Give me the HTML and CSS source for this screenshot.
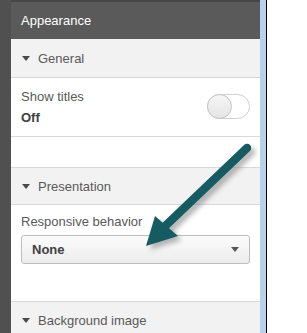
FILE: index.html
```html
<!DOCTYPE html>
<html>
<head>
<meta charset="utf-8">
<link rel="stylesheet" href="styles.css">
</head>
<body>
<div class="frame">
  <div class="edge"></div>
  <div class="panel">
    <div class="head">Appearance</div>
    <div class="sec-head first"><span class="tri"></span>General</div>
    <div class="row-toggle">
      <div class="labels">
        <div class="label">Show titles</div>
        <div class="value">Off</div>
      </div>
      <div class="toggle"><span class="knob"></span></div>
    </div>
    <div class="spacer"></div>
    <div class="sec-head bt"><span class="tri"></span>Presentation</div>
    <div class="pres">
      <div class="label">Responsive behavior</div>
      <div class="select"><span>None</span><span class="caret"></span></div>
    </div>
    <div class="sec-head bt"><span class="tri"></span>Background image</div>
  </div>
  <div class="blue"></div>
  <div class="black"></div>
  <svg class="arrow" width="307" height="333" viewBox="0 0 307 333">
    <defs>
      <filter id="sh" x="-20%" y="-20%" width="140%" height="140%">
        <feGaussianBlur stdDeviation="2.5"/>
      </filter>
    </defs>
    <g transform="translate(4,4)" fill="#7a7a7a" stroke="#7a7a7a" opacity="0.55" filter="url(#sh)">
      <line x1="247" y1="148" x2="160" y2="231" stroke-width="8.5" stroke-linecap="round"/>
      <polygon points="146,246 155,216 178,236" stroke="none"/>
    </g>
    <line x1="247" y1="148" x2="160" y2="231" stroke="#165b61" stroke-width="8.5" stroke-linecap="round"/>
    <polygon points="146,246 155,216 178,236" fill="#165b61"/>
  </svg>
</div>
</body>
</html>
```
FILE: styles.css
```css
html, body {
  margin: 0;
  padding: 0;
  background: #ffffff;
}
body {
  font-family: "Liberation Sans", Arial, sans-serif;
  font-size: 13px;
  color: #595959;
}
.frame {
  position: relative;
  display: flex;
  height: 333px;
  width: 307px;
  overflow: hidden;
}
.edge {
  width: 11px;
  background: #505050;
  flex: none;
}
.panel {
  width: 249px;
  flex: none;
  background: #ffffff;
  display: flex;
  flex-direction: column;
}
.panel > * {
  flex: none;
}
.head {
  height: 39px;
  box-sizing: border-box;
  background: #5a5a5a;
  border-top: 2px solid #474747;
  color: #ffffff;
  padding-left: 10px;
  display: flex;
  align-items: center;
  padding-bottom: 1px;
}
.sec-head {
  height: 38px;
  box-sizing: border-box;
  background: #f2f2f2;
  border-bottom: 1px solid #d9d9d9;
  display: flex;
  align-items: center;
  padding-left: 11px;
  color: #595959;
}
.sec-head.first {
  height: 39px;
}
.sec-head.bt {
  border-top: 1px solid #d9d9d9;
}
.tri {
  width: 0;
  height: 0;
  border-left: 4px solid transparent;
  border-right: 4px solid transparent;
  border-top: 5px solid #4a4a4a;
  margin-right: 8px;
}
.row-toggle {
  height: 59px;
  box-sizing: border-box;
  border-bottom: 1px solid #d9d9d9;
  display: flex;
  justify-content: space-between;
  padding: 10px 10px 0 10px;
}
.label {
  line-height: 18px;
}
.value {
  font-weight: bold;
  color: #404040;
  margin-top: 3px;
  line-height: 18px;
}
.toggle {
  position: relative;
  width: 43px;
  height: 25px;
  box-sizing: border-box;
  border: 1px solid #cfcfcf;
  border-radius: 13px;
  background: #ffffff;
  margin-top: 6px;
}
.knob {
  position: absolute;
  left: -1px;
  top: -1px;
  width: 25px;
  height: 25px;
  box-sizing: border-box;
  border-radius: 50%;
  border: 1px solid #c4c4c4;
  background: linear-gradient(#f7f7f7, #e4e4e4);
}
.spacer {
  height: 30px;
}
.pres {
  height: 96px;
  box-sizing: border-box;
  padding: 8px 10px 0 10px;
}
.select {
  margin-top: 4px;
  height: 29px;
  box-sizing: border-box;
  border: 1px solid #bdbdbd;
  border-radius: 3px;
  background: linear-gradient(#fbfbfb, #ececec);
  display: flex;
  align-items: center;
  justify-content: space-between;
  padding: 0 10px 0 10px;
  font-weight: bold;
  color: #404040;
}
.caret {
  width: 0;
  height: 0;
  border-left: 4px solid transparent;
  border-right: 4px solid transparent;
  border-top: 5px solid #555555;
}
.blue {
  width: 6px;
  background: #b7d1ea;
  flex: none;
}
.black {
  width: 1px;
  background: #000000;
  flex: none;
}
.arrow {
  position: absolute;
  left: 0;
  top: 0;
  pointer-events: none;
}
```
